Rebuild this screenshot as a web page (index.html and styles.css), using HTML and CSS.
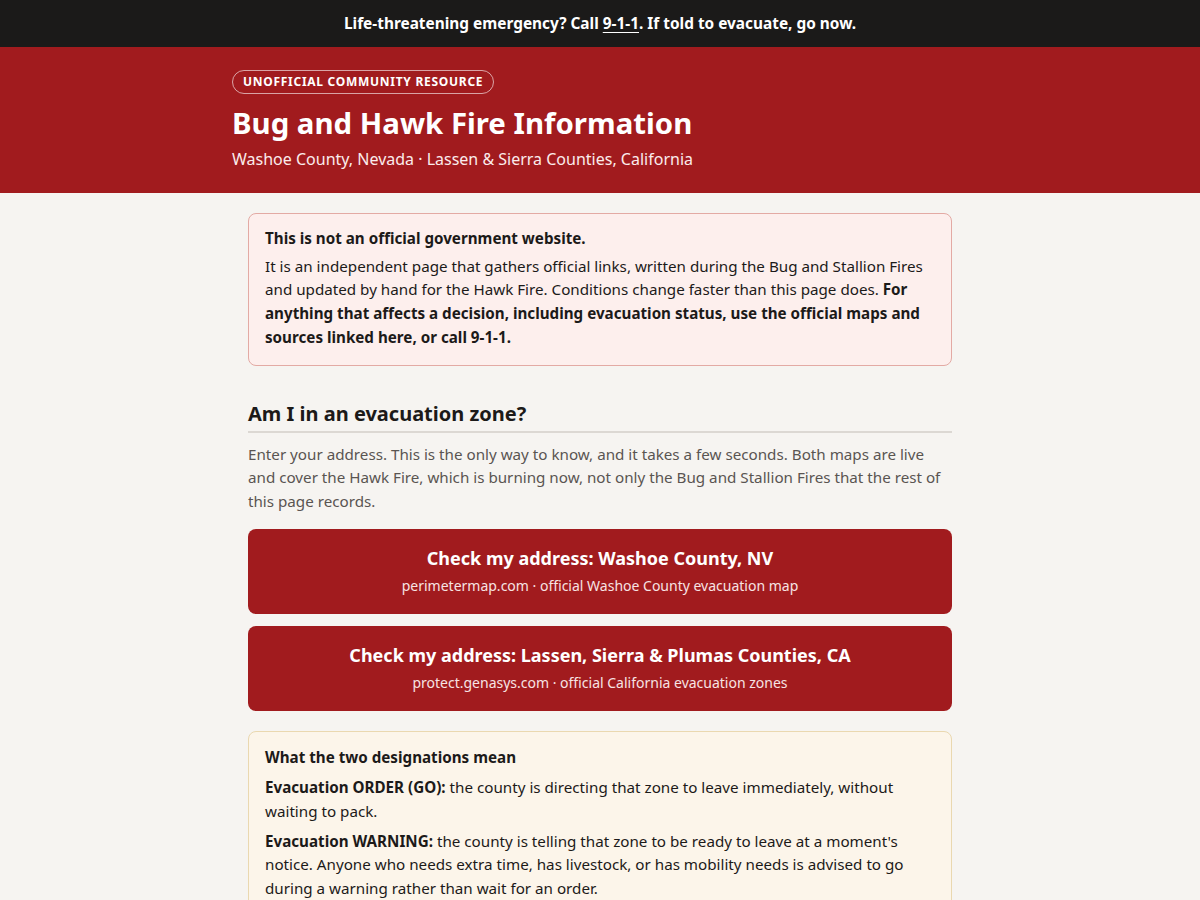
FILE: index.html
```html
<!DOCTYPE html>
<html lang="en">
<head>
<meta charset="utf-8">
<title>Bug and Hawk Fire Information</title>
<link rel="stylesheet" href="styles.css">
</head>
<body>
<div class="alertbar">Life-threatening emergency? Call <a href="#">9-1-1</a>. If told to evacuate, go now.</div>
<header class="hero">
  <div class="hero-inner">
    <span class="badge">Unofficial community resource</span>
    <h1>Bug and Hawk Fire Information</h1>
    <p class="sub">Washoe County, Nevada · Lassen &amp; Sierra Counties, California</p>
  </div>
</header>
<main class="main">
  <div class="notice">
    <p class="notice-title">This is not an official government website.</p>
    <p>It is an independent page that gathers official links, written during the Bug and Stallion Fires and updated by hand for the Hawk Fire. Conditions change faster than this page does. <strong>For anything that affects a decision, including evacuation status, use the official maps and sources linked here, or call 9-1-1.</strong></p>
  </div>
  <section class="section">
    <h2>Am I in an evacuation zone?</h2>
    <p class="lead">Enter your address. This is the only way to know, and it takes a few seconds. Both maps are live and cover the Hawk Fire, which is burning now, not only the Bug and Stallion Fires that the rest of this page records.</p>
    <a class="btn" href="#"><span class="btn-title">Check my address: Washoe County, NV</span><span class="btn-sub">perimetermap.com · official Washoe County evacuation map</span></a>
    <a class="btn" href="#"><span class="btn-title">Check my address: Lassen, Sierra &amp; Plumas Counties, CA</span><span class="btn-sub">protect.genasys.com · official California evacuation zones</span></a>
    <div class="defs">
      <p class="defs-title">What the two designations mean</p>
      <p class="def">Evacuation ORDER (GO):<span class="def-text"> the county is directing that zone to leave immediately, without waiting to pack.</span></p>
      <p class="def">Evacuation WARNING:<span class="def-text"> the county is telling that zone to be ready to leave at a moment's notice. Anyone who needs extra time, has livestock, or has mobility needs is advised to go during a warning rather than wait for an order.</span></p>
    </div>
  </section>
</main>
</body>
</html>
```
FILE: styles.css
```css
* { box-sizing: border-box; }
body {
  margin: 0;
  font-family: "Noto Sans", "DejaVu Sans", sans-serif;
  background: #f6f4f1;
  color: #1c1a19;
}
p { margin: 0; }
.alertbar {
  background: #1b1a19;
  color: #fff;
  font-weight: 700;
  font-size: 15.4px;
  text-align: center;
  height: 47px;
  line-height: 47px;
}
.alertbar a { color: #fff; text-decoration: underline; text-underline-offset: 3px; }
.hero {
  background: #a11b1e;
  color: #fff;
  padding: 22px 16px 22px;
}
.hero-inner { max-width: 736px; margin: 0 auto; }
.badge {
  display: inline-block;
  border: 1px solid rgba(255,255,255,0.6);
  border-radius: 999px;
  font-size: 12px;
  font-weight: 700;
  letter-spacing: 0.72px;
  text-transform: uppercase;
  padding: 3px 10px;
  line-height: 16px;
}
.hero h1 {
  margin: 11px 0 0;
  font-size: 29.4px;
  line-height: 36px;
  font-weight: 700;
}
.sub {
  margin-top: 6px;
  font-size: 16px;
  line-height: 24px;
  color: #fbecec;
}
.main { max-width: 736px; margin: 0 auto; padding: 20px 16px 40px; }
.notice {
  background: #fdefed;
  border: 1px solid #e3aaa4;
  border-radius: 8px;
  padding: 13px 16px 15px;
  font-size: 15.2px;
  line-height: 1.56;
}
.notice-title { font-weight: 700; margin-bottom: 4px; }
.section { margin-top: 35px; }
.section h2 {
  margin: 0;
  font-size: 20px;
  line-height: 26px;
  font-weight: 700;
  padding-bottom: 4px;
  border-bottom: 2px solid #dcd8d3;
}
.lead {
  margin-top: 10px;
  color: #5a5552;
  font-size: 15.2px;
  line-height: 1.55;
}
.btn {
  display: flex;
  flex-direction: column;
  align-items: center;
  background: #a11b1e;
  color: #fff;
  text-decoration: none;
  border-radius: 8px;
  padding: 17px 16px 18px;
  margin-top: 12px;
}
.lead + .btn { margin-top: 16px; }
.btn-title { font-size: 18px; font-weight: 700; line-height: 24px; }
.btn-sub { font-size: 14px; line-height: 20px; margin-top: 6px; color: #f7e3e3; }
.defs {
  margin-top: 20px;
  background: #fcf5ea;
  border: 1px solid #ead8b0;
  border-radius: 8px;
  padding: 14px 16px 16px;
  font-size: 15.2px;
  line-height: 1.55;
}
.defs-title { font-weight: 700; }
.def { font-weight: 700; margin-top: 6.5px; }
.def-text { font-weight: 400; }
```
